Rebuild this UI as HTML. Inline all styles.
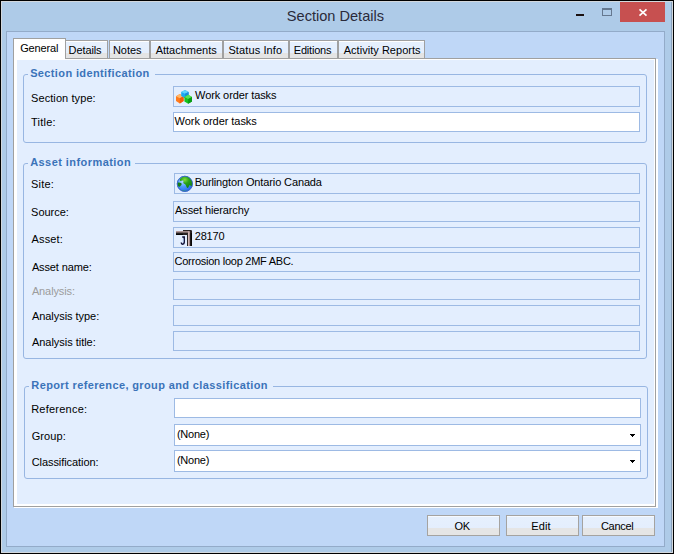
<!DOCTYPE html>
<html><head><meta charset="utf-8"><title>Section Details</title>
<style>
html,body{margin:0;padding:0;}
body{width:674px;height:554px;background:#000;position:relative;overflow:hidden;font-family:"Liberation Sans",sans-serif;font-size:11px;color:#000;}
div,span,svg{position:absolute;box-sizing:border-box;}
.t{white-space:nowrap;line-height:14px;height:14px;}
#lite{left:1px;top:1px;width:672px;height:552px;background:#d3d8dd;}
#frame{left:2px;top:2px;width:670px;height:550px;background:#aecbe8;border-right:1px solid #8aa2bd;}
#client{left:6px;top:31px;width:659px;height:516px;background:#bfd7f7;border:1px solid #93abc9;}
#close{left:620px;top:2px;width:45px;height:20px;background:#c75050;}
#min{left:576px;top:14px;width:8px;height:2px;background:#1a1010;}
#max{left:602px;top:8px;width:10px;height:8px;border:1px solid #65788f;border-top-width:2px;}
#pgw{left:14px;top:59px;width:644px;height:449px;background:#fff;}
#pgb{left:13px;top:58px;width:643px;height:449px;border:1px solid #a0a0a0;}
#pg{left:17px;top:60px;width:637px;height:444px;background:#e3eefe;}
.tab{top:40px;height:19px;border:1px solid #a0a0a0;background:linear-gradient(#fff 0,#fff 1px,#e6f0fd 1px,#e4eefd 12px,#e4e4e4 12px);}
#tabsel{left:13px;top:38px;width:53px;height:20px;background:#fff;border:1px solid #a0a0a0;border-bottom:none;}
#tabw{left:14px;top:58px;width:51px;height:2px;background:#fff;}
.gb{border:1px solid #98b6e2;border-radius:3px;}
.gm{background:#e3eefe;height:3px;}
.f{border:1px solid #9dbae4;background:#e3eefe;}
.f.w{background:#fff;}
.btn{top:515px;width:73px;height:21px;border:1px solid #a5a3a0;background:linear-gradient(#f6faff 0,#f6faff 1px,#e6f0fd 1px,#e4eefd 12px,#e5e5e5 12px);}
.arr{width:5px;height:1px;background:#000;}
.arr:before{content:"";position:absolute;left:1px;top:1px;width:3px;height:1px;background:#000;}
.arr:after{content:"";position:absolute;left:2px;top:2px;width:1px;height:1px;background:#000;}
</style></head><body>
<div id="lite"></div>
<div id="frame"></div>
<div id="min"></div><div id="max"></div>
<div id="close"><svg width="45" height="20" style="left:0;top:0"><path d="M19.5 7.3 L26.5 13.7 M26.5 7.3 L19.5 13.7" stroke="#fff" stroke-width="1.7" fill="none"/></svg></div>
<div id="client"></div>
<div id="pgw"></div><div id="pgb"></div><div id="pg"></div>
<div class="tab" style="left:65px;width:43px"></div>
<div class="tab" style="left:109px;width:41px"></div>
<div class="tab" style="left:150px;width:73px"></div>
<div class="tab" style="left:223px;width:66px"></div>
<div class="tab" style="left:289px;width:49px"></div>
<div class="tab" style="left:338px;width:87px"></div>
<div id="tabsel"></div><div id="tabw"></div>

<div class="gb" style="left:23px;top:74px;width:624px;height:69px"></div>
<div class="gm" style="left:28px;top:73px;width:127px"></div>
<div class="f" style="left:173px;top:86px;width:467px;height:21px"></div>
<div class="f w" style="left:173px;top:112px;width:467px;height:20px"></div>

<div class="gb" style="left:23px;top:163px;width:624px;height:196px"></div>
<div class="gm" style="left:28px;top:162px;width:107px"></div>
<div class="f" style="left:174px;top:173px;width:466px;height:21px"></div>
<div class="f" style="left:173px;top:201px;width:467px;height:21px"></div>
<div class="f" style="left:173px;top:227px;width:467px;height:21px"></div>
<div class="f" style="left:173px;top:252px;width:467px;height:20px"></div>
<div class="f" style="left:173px;top:279px;width:467px;height:21px"></div>
<div class="f" style="left:173px;top:305px;width:467px;height:21px"></div>
<div class="f" style="left:173px;top:331px;width:467px;height:20px"></div>

<div class="gb" style="left:24px;top:386px;width:624px;height:93px"></div>
<div class="gm" style="left:29px;top:385px;width:244px"></div>
<div class="f w" style="left:174px;top:398px;width:467px;height:20px"></div>
<div class="f w" style="left:174px;top:424px;width:467px;height:22px"></div>
<div class="f w" style="left:174px;top:450px;width:467px;height:22px"></div>
<div class="arr" style="left:630px;top:434px"></div>
<div class="arr" style="left:630px;top:460px"></div>

<div class="btn" style="left:427px"></div>
<div class="btn" style="left:506px"></div>
<div class="btn" style="left:582px"></div>
<!-- cubes icon -->
<svg style="left:175px;top:88px" width="18" height="17" viewBox="175 88 18 17">
 <path d="M179.8 94 L183.6 96.2 L183.6 101 L179.8 103.4 L176 101 L176 96.2 Z" fill="#ff7a1c"/>
 <path d="M179.8 94 L183.6 96.2 L179.8 98.2 L176 96.2 Z" fill="#ffb86a"/>
 <path d="M179.8 98.2 L183.6 96.2 L183.6 101 L179.8 103.4 Z" fill="#f25c08"/>
 <path d="M185 90 L188.6 92 L188.6 96 L185 98.2 L181.2 96 L181.2 92 Z" fill="#1aa9f2"/>
 <path d="M185 90 L188.6 92 L185 93.8 L181.2 92 Z" fill="#5fd2ff"/>
 <path d="M185 93.8 L188.6 92 L188.6 96 L185 98.2 Z" fill="#178be0"/>
 <path d="M188.2 94.8 L192 97 L192 101.4 L188.2 103.8 L184.4 101.4 L184.4 97 Z" fill="#16c41e"/>
 <path d="M188.2 94.8 L192 97 L188.2 99 L184.4 97 Z" fill="#58e058"/>
 <path d="M188.2 99 L192 97 L192 101.4 L188.2 103.8 Z" fill="#0a9c14"/>
</svg>
<!-- globe icon -->
<svg style="left:176px;top:175px" width="18" height="18" viewBox="176 175 18 18">
 <defs><radialGradient id="gs" cx="0.36" cy="0.34" r="0.75"><stop offset="0" stop-color="#b4d8ff"/><stop offset="0.45" stop-color="#4f9bfb"/><stop offset="1" stop-color="#1f60ea"/></radialGradient>
 <radialGradient id="gl" cx="0.4" cy="0.3" r="0.8"><stop offset="0" stop-color="#86dc3c"/><stop offset="0.4" stop-color="#2aa41a"/><stop offset="1" stop-color="#0f7a10"/></radialGradient>
 <clipPath id="gc"><circle cx="184.85" cy="183.85" r="7.7"/></clipPath></defs>
 <circle cx="184.85" cy="183.85" r="7.6" fill="url(#gs)" stroke="#3a66c8" stroke-width="0.9"/>
 <g clip-path="url(#gc)">
 <path d="M179.6 179.8 C180.6 177.6 183 176.2 185 176.2 C188 176.2 190.4 177.6 191.8 180 C192.6 181.8 192.8 184 192.3 185.8 C191.6 186.6 190.9 186.4 190.4 185.4 C190 184.8 189.5 185 189.1 185.8 C188.8 187 188.2 187.8 187.4 187.9 C186.6 187.6 186.3 186.2 185.8 185 C185.2 184 184.4 183.8 183.8 183.4 C183.1 182.8 183.2 181.8 183.6 181 C183 180.4 182 180.6 181.2 181 C180.4 181 179.8 180.6 179.6 179.8 Z" fill="url(#gl)"/>
 <path d="M177.4 182.7 C178.6 182.2 180.2 182.4 181.3 183.3 C181.9 184 181.7 184.8 180.8 185.5 C180.2 186.3 179.6 187 178.8 186.8 C177.8 186 177.3 184.4 177.4 182.7 Z" fill="#157f10"/>
 <path d="M181.6 190.3 C183.4 190.9 186 190.9 187.6 190.5 C186.4 191.6 183.2 191.7 181.6 190.3 Z" fill="#2fae3a"/>
 </g>
 <circle cx="184.85" cy="183.85" r="7.6" fill="none" stroke="#3a66c8" stroke-width="0.8" opacity="0.8"/>
</svg>
<!-- pipe elbow icon -->
<svg style="left:175px;top:229px" width="18" height="18" viewBox="175 229 18 18">
 <defs><linearGradient id="pv" gradientUnits="userSpaceOnUse" x1="187" y1="0" x2="192" y2="0"><stop offset="0" stop-color="#2a2424"/><stop offset="0.18" stop-color="#2a2424"/><stop offset="0.24" stop-color="#dcc0c0"/><stop offset="0.46" stop-color="#c8acac"/><stop offset="0.58" stop-color="#5a4e4e"/><stop offset="0.72" stop-color="#141010"/><stop offset="1" stop-color="#000"/></linearGradient>
 <linearGradient id="ph" x1="0" y1="0" x2="0" y2="1"><stop offset="0" stop-color="#c4a4a4"/><stop offset="0.25" stop-color="#a08c8c"/><stop offset="0.5" stop-color="#3c3434"/><stop offset="0.75" stop-color="#0c0a0a"/><stop offset="1" stop-color="#000"/></linearGradient></defs>
 <rect x="176" y="231" width="11.5" height="4" fill="url(#ph)"/>
 <path d="M183 230 L190.4 230 Q192 230 192 231.6 L192 246 L187 246 L187 235 L183 235 Z" fill="url(#pv)"/>
 <path d="M183 230 L190.4 230 Q192 230 192 231.6 L192 233 L190 233 L190 231.2 L183 231.2 Z" fill="#2a2222"/>
 <path d="M183 231.2 L189.4 231.2 L189.4 233.6 Q188.8 232.5 187.6 232.5 L183 232.5 Z" fill="#c8acac"/>
 <path d="M182.2 236.9 L184.2 236.9 L184.2 242.6 Q184.2 244.3 182.6 244.3 Q181.3 244.3 181.3 242.6" fill="none" stroke="#0a0c34" stroke-width="1.5"/>
 <path d="M183.1 238.6 L183.1 242.2" stroke="#b8d4ff" stroke-width="0.8" fill="none"/>
</svg>

<span class="t" style="left:286.85px;top:7px;letter-spacing:-0.014px;font-size:14.6px;line-height:18px;height:18px;color:#2a2a3a;">Section Details</span>
<span class="t" style="left:20.20px;top:41px;letter-spacing:-0.167px;">General</span>
<span class="t" style="left:68.60px;top:43px;letter-spacing:-0.108px;">Details</span>
<span class="t" style="left:112.90px;top:43px;letter-spacing:-0.013px;">Notes</span>
<span class="t" style="left:155.70px;top:43px;letter-spacing:-0.015px;">Attachments</span>
<span class="t" style="left:228.40px;top:43px;letter-spacing:0.115px;">Status Info</span>
<span class="t" style="left:293.80px;top:43px;letter-spacing:-0.207px;">Editions</span>
<span class="t" style="left:343.70px;top:43px;letter-spacing:0.033px;">Activity Reports</span>
<span class="t" style="left:30.15px;top:66px;letter-spacing:0.374px;font-weight:bold;color:#3b73b9;">Section identification</span>
<span class="t" style="left:30.15px;top:155px;letter-spacing:0.444px;font-weight:bold;color:#3b73b9;">Asset information</span>
<span class="t" style="left:31.35px;top:378px;letter-spacing:0.377px;font-weight:bold;color:#3b73b9;">Report reference, group and classification</span>
<span class="t" style="left:31.00px;top:91px;letter-spacing:0.087px;">Section type:</span>
<span class="t" style="left:30.95px;top:115px;letter-spacing:0.250px;">Title:</span>
<span class="t" style="left:31.10px;top:177px;letter-spacing:0.175px;">Site:</span>
<span class="t" style="left:31.10px;top:205px;letter-spacing:-0.017px;">Source:</span>
<span class="t" style="left:31.60px;top:232px;letter-spacing:0.120px;">Asset:</span>
<span class="t" style="left:31.90px;top:260px;letter-spacing:-0.125px;">Asset name:</span>
<span class="t" style="left:31.90px;top:284px;letter-spacing:-0.112px;color:#9c9c9c;">Analysis:</span>
<span class="t" style="left:31.90px;top:309px;letter-spacing:-0.038px;">Analysis type:</span>
<span class="t" style="left:31.90px;top:335px;letter-spacing:-0.025px;">Analysis title:</span>
<span class="t" style="left:31.20px;top:402px;letter-spacing:0.228px;">Reference:</span>
<span class="t" style="left:31.70px;top:429px;letter-spacing:0.090px;">Group:</span>
<span class="t" style="left:31.70px;top:455px;letter-spacing:-0.071px;">Classification:</span>
<span class="t" style="left:195.10px;top:88px;letter-spacing:-0.100px;">Work order tasks</span>
<span class="t" style="left:174.60px;top:114px;letter-spacing:-0.047px;">Work order tasks</span>
<span class="t" style="left:194.70px;top:175px;letter-spacing:-0.123px;">Burlington Ontario Canada</span>
<span class="t" style="left:175.10px;top:203px;letter-spacing:-0.125px;">Asset hierarchy</span>
<span class="t" style="left:194.70px;top:229px;letter-spacing:-0.162px;">28170</span>
<span class="t" style="left:174.50px;top:254px;letter-spacing:-0.252px;">Corrosion loop 2MF ABC.</span>
<span class="t" style="left:176.95px;top:427px;letter-spacing:-0.230px;">(None)</span>
<span class="t" style="left:176.95px;top:453px;letter-spacing:-0.230px;">(None)</span>
<span class="t" style="left:454.52px;top:519px;letter-spacing:-0.300px;">OK</span>
<span class="t" style="left:531.30px;top:519px;letter-spacing:0.117px;">Edit</span>
<span class="t" style="left:600.90px;top:519px;letter-spacing:-0.280px;">Cancel</span>
</body></html>
